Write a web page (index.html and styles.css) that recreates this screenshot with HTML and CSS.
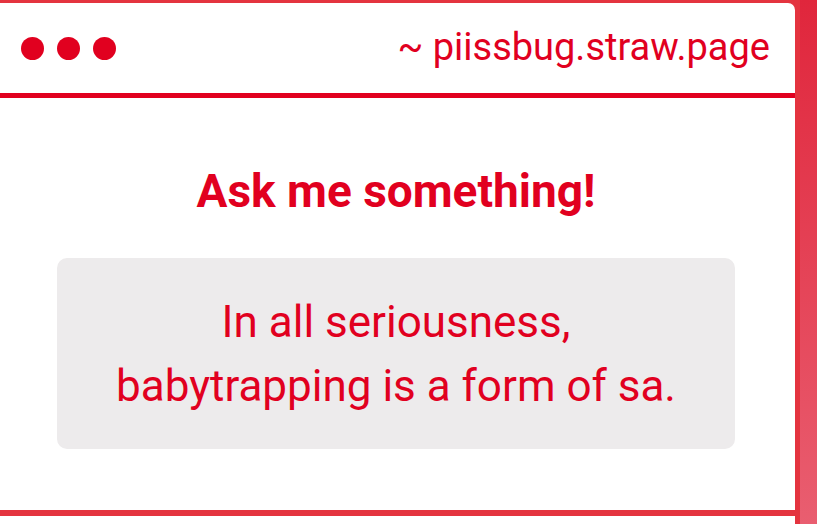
FILE: index.html
```html
<!DOCTYPE html>
<html lang="en">
<head>
<meta charset="utf-8">
<title>piissbug.straw.page</title>
<link rel="stylesheet" href="styles.css">
</head>
<body>
<div class="column">
  <section class="window">
    <header class="titlebar">
      <div class="dots">
        <span class="dot"></span>
        <span class="dot"></span>
        <span class="dot"></span>
      </div>
      <div class="address">~ piissbug.straw.page</div>
    </header>
    <div class="content">
      <h1 class="heading">Ask me something!</h1>
      <div class="question">
        <p>In all seriousness,<br>babytrapping is a form of sa.</p>
      </div>
    </div>
  </section>
  <section class="window next"></section>
</div>
</body>
</html>
```

FILE: styles.css
```css
html, body {
  margin: 0;
  height: 100%;
}

body {
  background: linear-gradient(to bottom, #e0263c 0%, #e95e70 100%);
  font-family: Roboto, "Liberation Sans", sans-serif;
  color: #e1001f;
  overflow: hidden;
}

.column {
  width: 800px;
  border-right: 5px solid #e4343f;
  background: #e4343f;
  padding-top: 3px;
  display: flex;
  flex-direction: column;
  gap: 6px;
  min-height: 100%;
  box-sizing: border-box;
}

.window {
  background: #ffffff;
  border-top-right-radius: 7px;
}

.titlebar {
  height: 95px;
  box-sizing: border-box;
  border-bottom: 5px solid #e1001f;
  display: flex;
  align-items: center;
  justify-content: space-between;
  padding: 0 25px 0 21px;
}

.dots {
  display: flex;
  gap: 13px;
}

.dot {
  width: 23px;
  height: 23px;
  border-radius: 50%;
  background: #e1001f;
}

.address {
  font-size: 38px;
  line-height: 1;
  margin-bottom: 3px;
}

.content {
  padding: 70px 60px 61px 57px;
  display: flex;
  flex-direction: column;
  align-items: center;
}

.heading {
  margin: 0 0 44px;
  font-size: 46px;
  font-weight: 700;
  line-height: 1;
}

.question {
  align-self: stretch;
  background: #edebec;
  border-radius: 10px;
  padding: 32px 20px 31px;
  text-align: center;
}

.question p {
  margin: 0;
  font-size: 44px;
  line-height: 64px;
}

.next {
  flex: 1;
  border-top-right-radius: 0;
}
```
